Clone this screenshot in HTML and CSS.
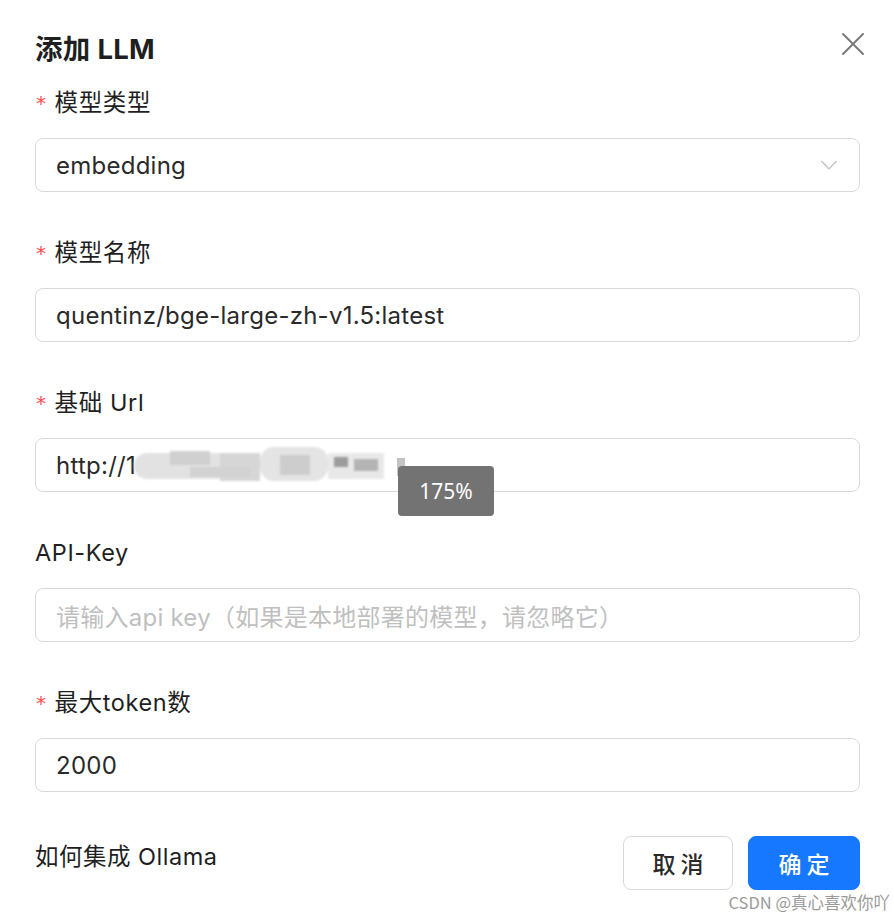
FILE: index.html
```html
<!DOCTYPE html>
<html lang="zh">
<head>
<meta charset="utf-8">
<title>添加 LLM</title>
<link rel="stylesheet" href="styles.css">
</head>
<body>
<div class="modal">
  <div class="header">
    <div class="title">添加 LLM</div>
    <svg class="close" width="24" height="24" viewBox="0 0 24 24"><path d="M2 2 L22 22 M22 2 L2 22" stroke="#7a7a7a" stroke-width="2" fill="none" stroke-linecap="round"/></svg>
  </div>

  <div class="field">
    <div class="label"><span class="req">*</span>模型类型</div>
    <div class="input select">
      <span class="value">embedding</span>
      <svg class="chev" width="18" height="12" viewBox="0 0 18 12"><path d="M1.5 2 L9 10 L16.5 2" stroke="#c4c4c4" stroke-width="1.4" fill="none"/></svg>
    </div>
  </div>

  <div class="field">
    <div class="label"><span class="req">*</span>模型名称</div>
    <div class="input"><span class="value">quentinz/bge-large-zh-v1.5:latest</span></div>
  </div>

  <div class="field">
    <div class="label"><span class="req">*</span>基础 Url</div>
    <div class="input url">
      <span class="value">http://1</span>
      <div class="blur">
        <span class="b b1"></span><span class="b b2"></span><span class="b b3"></span><span class="b b4"></span><span class="b b5"></span><span class="b b6"></span><span class="b b7"></span><span class="b b8"></span><span class="b b9"></span>
      </div>
    </div>
  </div>

  <div class="field">
    <div class="label">API-Key</div>
    <div class="input"><span class="placeholder">请输入api key（如果是本地部署的模型，请忽略它）</span></div>
  </div>

  <div class="field">
    <div class="label"><span class="req">*</span>最大token数</div>
    <div class="input"><span class="value">2000</span></div>
  </div>

  <div class="footer">
    <div class="link">如何集成 Ollama</div>
    <div class="buttons">
      <button class="btn cancel">取 消</button>
      <button class="btn ok">确 定</button>
    </div>
  </div>
</div>

<div class="pixel"></div>
<div class="zoom-tip">175%</div>
<div class="watermark">CSDN @真心喜欢你吖</div>
</body>
</html>
```

FILE: styles.css
```css
html, body {
  margin: 0;
  padding: 0;
  background: #ffffff;
}
body {
  width: 894px;
  height: 918px;
  overflow: hidden;
  position: relative;
  font-family: "Inter", "Noto Sans CJK SC", sans-serif;
  color: rgba(0, 0, 0, 0.88);
}
.modal {
  padding: 31px 34px 0 35px;
}
.header {
  display: flex;
  justify-content: space-between;
  align-items: center;
  height: 36px;
}
.title {
  font-size: 27.5px;
  font-weight: 700;
  line-height: 36px;
  letter-spacing: 0.3px;
  color: #1f1f1f;
}
.close {
  margin-right: -5px;
  margin-top: -11px;
}
.field {
  margin-bottom: 46px;
}
.header + .field {
  margin-top: 21px;
}
.label {
  font-size: 23.5px;
  line-height: 30px;
  height: 30px;
  margin-bottom: 20px;
  letter-spacing: 0.6px;
  color: #1f1f1f;
  display: flex;
  align-items: center;
}
.req {
  color: #ff4d4f;
  font-size: 20px;
  margin-left: 1px;
  margin-right: 8px;
  font-family: "DejaVu Sans", sans-serif;
}
.input {
  height: 54px;
  box-sizing: border-box;
  border: 1px solid #d9d9d9;
  border-radius: 8px;
  padding: 0 20px;
  display: flex;
  align-items: center;
  font-size: 24px;
  letter-spacing: 0.25px;
  position: relative;
}
.value {
  color: #2a2a2a;
}
.placeholder {
  color: #bfbfbf;
}
.select {
  justify-content: space-between;
}
.chev {
  margin-right: 1px;
}
.blur {
  position: absolute;
  left: 98px;
  top: 8px;
  width: 250px;
  height: 40px;
  filter: blur(1px);
}
.b {
  position: absolute;
  background: #dedede;
}
.b1 { left: 0; top: 6px; width: 126px; height: 26px; background: #e2e2e2; border-radius: 13px; }
.b2 { left: 36px; top: 4px; width: 40px; height: 14px; background: #d0d0d0; }
.b3 { left: 86px; top: 6px; width: 40px; height: 28px; background: #d6d6d6; }
.b4 { left: 126px; top: 0; width: 68px; height: 34px; background: #e4e4e4; border-radius: 14px; }
.b5 { left: 146px; top: 8px; width: 30px; height: 20px; background: #cdcdcd; }
.b6 { left: 194px; top: 6px; width: 56px; height: 26px; background: #e8e8e8; }
.b7 { left: 200px; top: 10px; width: 14px; height: 10px; background: #9c9c9c; }
.b8 { left: 220px; top: 12px; width: 24px; height: 12px; background: #b4b4b4; }
.b9 { left: 56px; top: 20px; width: 60px; height: 10px; background: #d2d2d2; }
.footer {
  display: flex;
  justify-content: space-between;
  align-items: flex-start;
  margin-top: -2px;
}
.link {
  font-size: 23.5px;
  line-height: 30px;
  padding-top: 6px;
  letter-spacing: 0.5px;
  color: #1f1f1f;
}
.buttons {
  display: flex;
  gap: 15px;
}
.btn {
  height: 54px;
  border-radius: 8px;
  font-family: "Noto Sans CJK SC", sans-serif;
  font-size: 23px;
  font-weight: 500;
  padding: 0;
  cursor: pointer;
}
.cancel {
  width: 110px;
  background: #ffffff;
  border: 1px solid #d9d9d9;
  color: #2a2a2a;
}
.ok {
  width: 112px;
  background: #1677ff;
  border: 1px solid #1677ff;
  color: #ffffff;
}
.zoom-tip {
  position: absolute;
  left: 398px;
  top: 466px;
  width: 96px;
  height: 50px;
  background: #737373;
  border-radius: 4px;
  color: #ffffff;
  font-family: "Noto Sans", sans-serif;
  font-size: 21px;
  line-height: 50px;
  text-align: center;
}
.pixel {
  position: absolute;
  left: 397px;
  top: 458px;
  width: 8px;
  height: 18px;
  background: #c4c4c4;
}
.watermark {
  position: absolute;
  right: 4px;
  top: 892px;
  font-family: "Noto Sans CJK SC", sans-serif;
  font-size: 16.5px;
  line-height: 20px;
  color: #9a9a9a;
}
```
